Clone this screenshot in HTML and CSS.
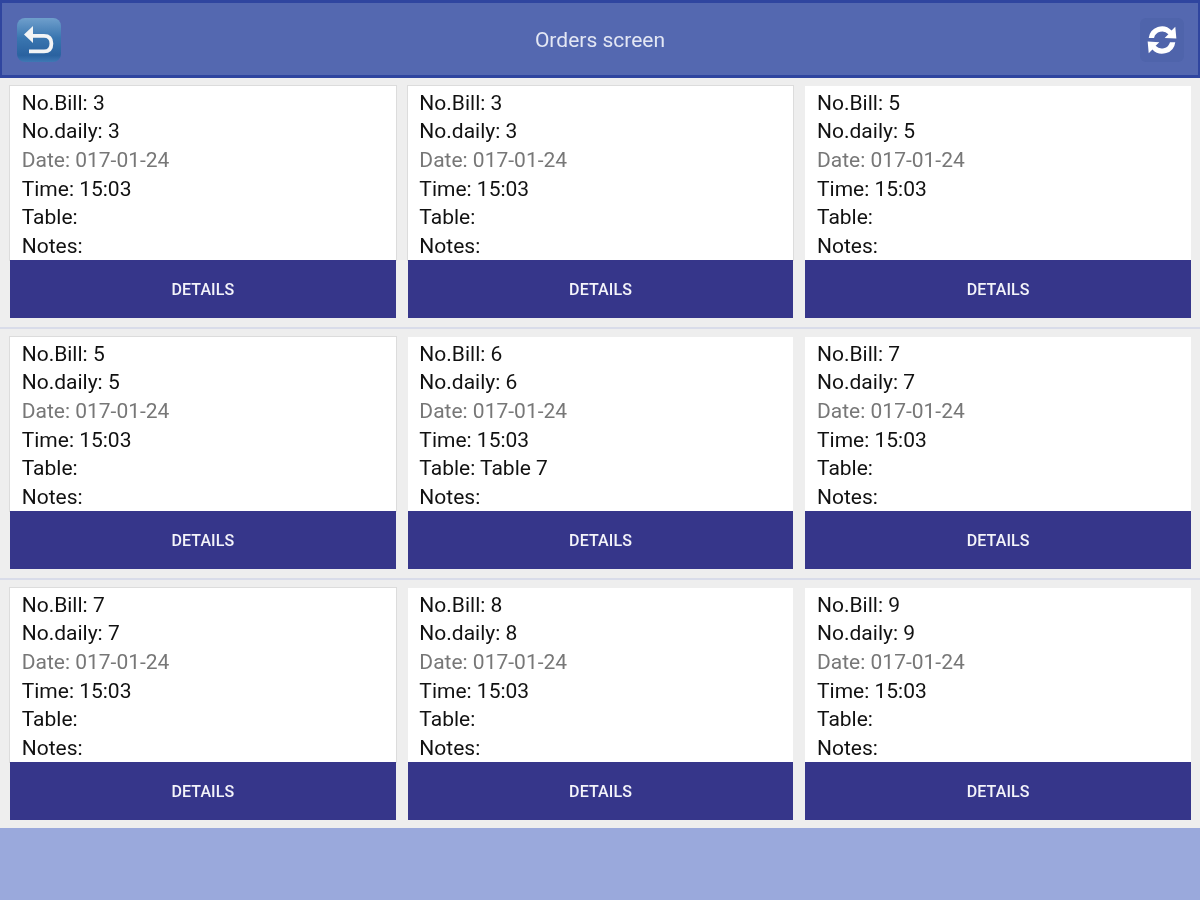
FILE: index.html
```html
<!DOCTYPE html>
<html>
<head>
<meta charset="utf-8">
<title>Orders screen</title>
<link rel="stylesheet" href="styles.css">
</head>
<body>
<header class="topbar">
  <button class="back" aria-label="Back">
    <svg width="36" height="36" viewBox="0 0 36 36"><path d="M12 4 L3 12.500 L12 21 L12 15.800 L23 15.800 Q28.500 15.800 28.500 21.500 Q28.500 27.500 23 27.500 L8 27.500 L8 31.300 L23 31.300 Q32.300 31.300 32.300 21.500 Q32.300 12 23 12 L12 12 Z" fill="#f3f4f5"/></svg>
  </button>
  <h1 class="title">Orders screen</h1>
  <button class="refresh" aria-label="Refresh">
    <svg width="34" height="34" viewBox="0 0 32 32"><path d="M3.500 14 A12.500 12.500 0 0 1 25 7 L28.500 3.500 L29.500 14.500 L18.500 14 L22 10.500 A8 8 0 0 0 8.500 14 Z M28.500 18 A12.500 12.500 0 0 1 7 25 L3.500 28.500 L2.500 17.500 L13.500 18 L10 21.500 A8 8 0 0 0 23.500 18 Z" fill="#fff"/></svg>
  </button>
</header>
<main class="rows">
  <section class="row">
    <article class="card outlined"><div class="info"><p>No.Bill: 3</p><p>No.daily: 3</p><p class="muted">Date: 017-01-24</p><p>Time: 15:03</p><p>Table:</p><p>Notes:</p></div><div class="details">DETAILS</div></article>
    <article class="card outlined"><div class="info"><p>No.Bill: 3</p><p>No.daily: 3</p><p class="muted">Date: 017-01-24</p><p>Time: 15:03</p><p>Table:</p><p>Notes:</p></div><div class="details">DETAILS</div></article>
    <article class="card"><div class="info"><p>No.Bill: 5</p><p>No.daily: 5</p><p class="muted">Date: 017-01-24</p><p>Time: 15:03</p><p>Table:</p><p>Notes:</p></div><div class="details">DETAILS</div></article>
  </section>
  <section class="row">
    <article class="card outlined"><div class="info"><p>No.Bill: 5</p><p>No.daily: 5</p><p class="muted">Date: 017-01-24</p><p>Time: 15:03</p><p>Table:</p><p>Notes:</p></div><div class="details">DETAILS</div></article>
    <article class="card"><div class="info"><p>No.Bill: 6</p><p>No.daily: 6</p><p class="muted">Date: 017-01-24</p><p>Time: 15:03</p><p>Table: Table 7</p><p>Notes:</p></div><div class="details">DETAILS</div></article>
    <article class="card"><div class="info"><p>No.Bill: 7</p><p>No.daily: 7</p><p class="muted">Date: 017-01-24</p><p>Time: 15:03</p><p>Table:</p><p>Notes:</p></div><div class="details">DETAILS</div></article>
  </section>
  <section class="row">
    <article class="card outlined"><div class="info"><p>No.Bill: 7</p><p>No.daily: 7</p><p class="muted">Date: 017-01-24</p><p>Time: 15:03</p><p>Table:</p><p>Notes:</p></div><div class="details">DETAILS</div></article>
    <article class="card"><div class="info"><p>No.Bill: 8</p><p>No.daily: 8</p><p class="muted">Date: 017-01-24</p><p>Time: 15:03</p><p>Table:</p><p>Notes:</p></div><div class="details">DETAILS</div></article>
    <article class="card"><div class="info"><p>No.Bill: 9</p><p>No.daily: 9</p><p class="muted">Date: 017-01-24</p><p>Time: 15:03</p><p>Table:</p><p>Notes:</p></div><div class="details">DETAILS</div></article>
  </section>
</main>
<footer class="bottom"></footer>
</body>
</html>
```
FILE: styles.css
```css
* { box-sizing: border-box; }
html, body { margin: 0; padding: 0; height: 100%; }
html { background: #eeeeee; }
body { width: 1200px; height: 900px; display: flex; flex-direction: column; background: #eeeeee; font-family: Roboto, "Liberation Sans", sans-serif; overflow: hidden; filter: blur(0.6px); }
.topbar { height: 78px; flex: none; display: flex; align-items: center; justify-content: space-between; padding: 2px 14px 0 15px; background: #5468b0; border: 3px solid #2f459f; border-width: 3px 2px 3px 2px; }
.title { position: absolute; left: 0; right: 0; margin: 0; text-align: center; font-size: 21px; font-weight: 400; color: #e3e7f4; }
.back { width: 44px; height: 44px; padding: 0; border: 0; border-radius: 8px; background: linear-gradient(#6f9fcc, #3a76b0 45%, #2a62a0 85%, #3f78b4); display: flex; align-items: center; justify-content: center; }
.refresh { width: 44px; height: 44px; padding: 0; border: 0; border-radius: 6px; background: #4f64ab; display: flex; align-items: center; justify-content: center; }
.rows { flex: none; display: flex; flex-direction: column; }
.row { height: 251px; display: flex; gap: 12px; padding: 8px 9px 9px 10px; border-bottom: 2px solid #d9dce9; background: #eeeeee; }
.row:last-child { height: 248px; border-bottom: 0; }
.card { flex: 1; height: 232px; display: flex; flex-direction: column; background: #fff; }
.card.outlined .info { box-shadow: 0 0 0 1px #dcdcdc; }
.info { flex: 1; padding: 2.600px 11.700px 0; overflow: hidden; }
.info p { margin: 0; height: 28.700px; font-size: 21px; line-height: 29px; color: #111; white-space: nowrap; }
.info p.muted { color: #777; }
.details { height: 58px; flex: none; display: flex; align-items: center; justify-content: center; background: #36368a; color: #f4f4fa; font-size: 16px; font-weight: 500; letter-spacing: 0.1px; }
.bottom { flex: 1; background: #9aa9dc; }
```
